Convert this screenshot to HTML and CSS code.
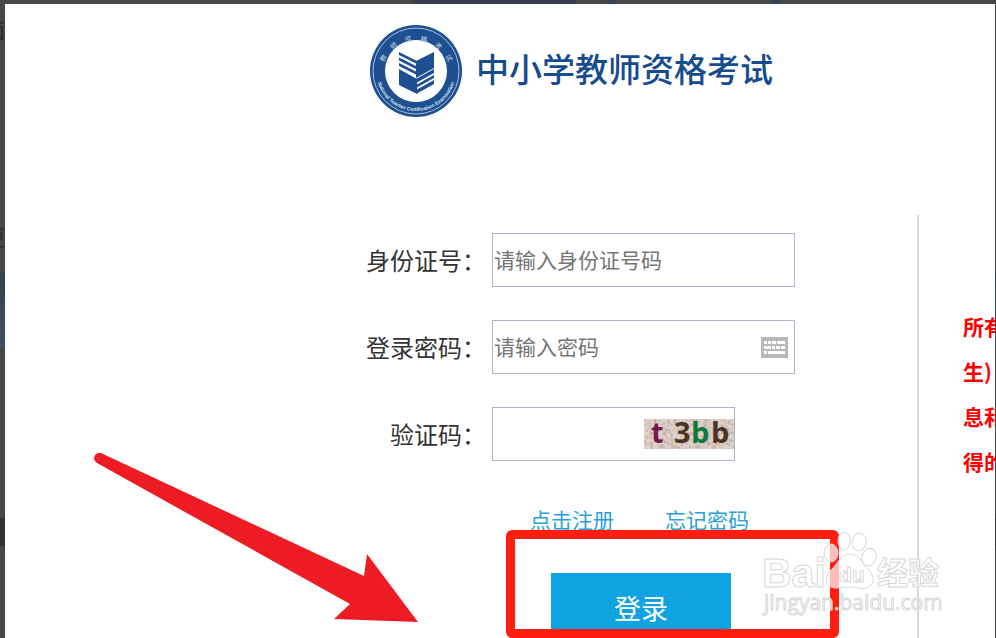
FILE: index.html
```
<!DOCTYPE html>
<html lang="zh-CN">
  <head>
    <meta charset="utf-8">
    <title>中小学教师资格考试</title>
    <link rel="stylesheet" href="styles.css">
  </head>

  <body>
    <div class="backdrop" aria-hidden="true">
      <span class="behind behind-top">面</span>
      <span class="behind behind-middle">更</span>
    </div>

    <div class="dialog">
      <header class="header">
        <svg class="logo" viewBox="0 0 94 94" aria-hidden="true">
          <defs>
            <path id="arc-top" d="M12 52a35 35 0 1 1 70 0" />
            <path id="arc-bottom" d="M7 47a40 40 0 0 0 80 0" />
          </defs>
          <circle cx="47" cy="47" r="46" fill="#1d4f91" />
          <circle cx="47" cy="47" r="43" fill="none" stroke="#a9bfdc" stroke-width="1" />
          <circle cx="47" cy="47" r="31" fill="#fff" />
          <text class="seal-cn" text-anchor="middle"><textPath href="#arc-top" startOffset="50%">教&nbsp;&nbsp;&nbsp;&nbsp;&nbsp;师&nbsp;&nbsp;&nbsp;&nbsp;&nbsp;资&nbsp;&nbsp;&nbsp;&nbsp;&nbsp;格&nbsp;&nbsp;&nbsp;&nbsp;&nbsp;考&nbsp;&nbsp;&nbsp;&nbsp;&nbsp;试</textPath></text>
          <text class="seal-en" text-anchor="middle"><textPath href="#arc-bottom" startOffset="50%">National Teacher Certification Examination</textPath></text>
          <g fill="#1d4f91">
            <path d="M47 37 65 28V44L47 54Z" />
            <path d="M30 28 48 37V40L30 31ZM30 33.500 48 42.500V45.500L30 36.500ZM30 39 48 48V51L30 42Z" />
            <path d="M30 45 48 55V70L30 61Z" />
            <path d="M65 45 47 55V59L65 49ZM65 51 47 61V64L65 54ZM65 56 47 66V70L65 60Z" />
          </g>
        </svg>
        <h1 class="title">中小学教师资格考试</h1>
      </header>

      <div class="content">
        <form class="login">
          <div class="row">
            <label for="idcard">身份证号：</label>
            <div class="field">
              <input type="text" id="idcard" placeholder="请输入身份证号码">
            </div>
          </div>

          <div class="row">
            <label for="password">登录密码：</label>
            <div class="field">
              <input type="password" id="password" placeholder="请输入密码">
              <svg class="keyboard" viewBox="0 0 27 21" aria-hidden="true">
                <path fill="#b9b9b9" d="M0 0h27v21H0z" />
                <path fill="#fff" d="M3 4h3v3H3zM7 4h3v3H7zM11 4h4v3h-4zM16 4h8v3h-8zM3 9h7v3H3zM11 9h3v3h-3zM15 9h4v3h-4zM20 9h4v3h-4zM3 14h3v3H3zM7 14h17v3H7z" />
              </svg>
            </div>
          </div>

          <div class="row">
            <label for="captcha">验证码：</label>
            <div class="field field-short">
              <input type="text" id="captcha">
              <svg class="captcha" viewBox="0 0 90 30" role="img" aria-label="t 3bb">
                <filter id="noise" x="0" y="0" width="100%" height="100%">
                  <feTurbulence type="fractalNoise" baseFrequency="0.3" numOctaves="2" seed="4" />
                  <feColorMatrix values="0 0 0 0 0.55  0 0 0 0 0.45  0 0 0 0 0.40  3.4 0 0 0 -1.4" />
                </filter>
                <path fill="#e0d2cb" d="M0 0h90v30H0z" />
                <path filter="url(#noise)" d="M0 0h90v30H0z" />
                <text x="7" y="24" fill="#74184a">t</text>
                <text x="30" y="24" fill="#4a3524">3</text>
                <text x="47" y="24" fill="#0d7a3c">b</text>
                <text x="67" y="24" fill="#4a3524">b</text>
              </svg>
            </div>
          </div>

          <div class="links">
            <a href="#">点击注册</a>
            <a href="#">忘记密码</a>
          </div>

          <div class="actions">
            <button type="button" class="submit">登录</button>
            <div class="highlight"></div>
          </div>
        </form>

        <aside class="notice">
          <p>所有</p>
          <p>生)</p>
          <p>息和</p>
          <p>得的</p>
        </aside>
      </div>

      <svg class="arrow" viewBox="0 0 326 170" aria-hidden="true">
        <path fill="#ed1c24" d="M8 0.5 270 123 273 101 324 169 240 166 256 151 3 10A5 5 0 0 1 8 0.5Z" />
      </svg>

      <svg class="watermark" viewBox="0 0 190 98" aria-hidden="true">
        <g class="mark">
          <ellipse cx="71" cy="25" rx="7" ry="9" />
          <ellipse cx="84" cy="13" rx="6" ry="9" />
          <ellipse cx="99" cy="14" rx="7" ry="9" transform="rotate(10 99 14)" />
          <ellipse cx="109" cy="29" rx="7" ry="9" transform="rotate(18 109 29)" />
          <path d="M90 26C80 26 78 36 72 41C64 47 64 60 76 60C82 60 86 59 91 59C97 59 101 62 107 60C116 56 114 46 107 40C101 35 100 26 90 26Z" />
          <text class="brand" x="2" y="59">Bai</text>
          <text class="paw-text" x="79" y="54">du</text>
          <text class="brand-cn" x="117" y="56">经验</text>
          <text class="site" x="4" y="82">jingyan.baidu.com</text>
        </g>
      </svg>
    </div>
  </body>
</html>
```

FILE: styles.css
```
* {
  box-sizing: border-box;
}

body {
  margin: 0;
  height: 100vh;
  overflow: hidden;
  background: #474747;
  font-family: "Noto Sans CJK SC", sans-serif;
  color: #333;
}

/* the dimmed page behind the dialog */
.backdrop {
  position: absolute;
  inset: 0;
  overflow: hidden;
  background:
    linear-gradient(#3a3d52, #3a3d52) 413px 0 / 163px 4px no-repeat,
    linear-gradient(#38415a, #38415a) 607px 0 / 8px 4px no-repeat,
    linear-gradient(#38415a, #38415a) 772px 0 / 8px 4px no-repeat,
    linear-gradient(transparent 272px, #36404d 272px, #435060 348px, transparent 348px, transparent 518px, #323234 518px, #323234 546px, transparent 546px);
}

.behind {
  position: absolute;
  left: -16px;
  font-size: 21px;
  line-height: 24px;
  color: #2b2b2b;
}

.behind-top {
  top: 17px;
}

.behind-middle {
  top: 224px;
}

.dialog {
  position: relative;
  display: flex;
  flex-direction: column;
  height: calc(100vh - 4px);
  margin: 4px 1px 0 5px;
  overflow: hidden;
  background: #fff;
}

.header {
  display: flex;
  align-items: center;
  gap: 13px;
  padding: 20px 0 97px 364px;
}

.logo {
  width: 94px;
  height: 94px;
}

.seal-cn {
  font-size: 7px;
  fill: #c3d3e8;
}

.seal-en {
  font-family: "Liberation Sans", sans-serif;
  font-size: 5px;
  font-weight: bold;
  fill: #dbe6f3;
}

.title {
  margin: 0;
  padding-bottom: 6px;
  font-size: 33px;
  font-weight: 500;
  line-height: 48px;
  color: #164c8e;
}

.content {
  flex: 1;
  display: grid;
  grid-template-columns: 1fr 78px;
}

.login {
  display: flex;
  flex-direction: column;
  align-items: flex-end;
  gap: 33px;
  padding: 18px 122px 0 0;
}

.row {
  display: flex;
  align-items: center;
  justify-content: flex-end;
  gap: 6px;
  width: 429px;
}

.row:nth-child(3) {
  padding-right: 60px;
}

.row label {
  flex: none;
  font-size: 24px;
  line-height: 36px;
}

.field {
  display: flex;
  align-items: center;
  width: 303px;
  height: 54px;
  border: 1px solid #a9b8c6;
}

.field-short {
  width: 243px;
}

.field input {
  flex: 1;
  min-width: 0;
  height: 100%;
  padding: 0 1px 2px;
  border: 0;
  outline: 0;
  background: none;
  font: inherit;
  font-size: 21px;
}

.field input::placeholder {
  color: #757575;
}

.keyboard {
  width: 27px;
  height: 21px;
  margin-right: 6px;
}

.captcha {
  width: 90px;
  height: 30px;
}

.captcha text {
  font-family: "Open Sans", sans-serif;
  font-size: 29px;
  font-weight: bold;
}

.links {
  display: flex;
  gap: 51px;
  margin-top: 10px;
  padding-right: 46px;
}

.links a {
  font-size: 21px;
  line-height: 30px;
  color: #2a9fd8;
  text-decoration: none;
}

.actions {
  position: relative;
  margin-top: 6px;
  padding-right: 64px;
}

.submit {
  display: block;
  width: 180px;
  height: 72px;
  padding: 0 0 4px;
  border: 0;
  background: #0fa3e2;
  font: inherit;
  font-size: 27px;
  color: #fff;
}

.highlight {
  position: absolute;
  top: -43px;
  right: -44px;
  width: 333px;
  height: 108px;
  border: 9px solid #ff1e10;
  border-radius: 6px;
}

.notice {
  padding: 89px 0 0 44px;
  overflow: hidden;
  border-left: 2px solid #d9d9d9;
  font-size: 21px;
  font-weight: bold;
  line-height: 45px;
  color: #f00;
  white-space: nowrap;
}

.notice p {
  margin: 0;
}

/* annotations on top of the dialog */
.arrow {
  position: absolute;
  top: 449px;
  left: 89px;
  width: 326px;
  height: 170px;
}

.watermark {
  position: absolute;
  right: 45px;
  bottom: 12px;
  width: 190px;
  height: 98px;
}

.mark {
  fill: #fff;
  fill-opacity: 0.7;
  stroke: #d8d8d8;
  stroke-width: 1;
}

.brand {
  font-family: "Liberation Sans", sans-serif;
  font-size: 41px;
  font-weight: bold;
}

.paw-text {
  font-family: "Liberation Sans", sans-serif;
  font-size: 21px;
  font-weight: bold;
}

.brand-cn {
  font-size: 31px;
  font-weight: bold;
}

.site {
  font-family: "Open Sans", sans-serif;
  font-size: 21px;
}
```
